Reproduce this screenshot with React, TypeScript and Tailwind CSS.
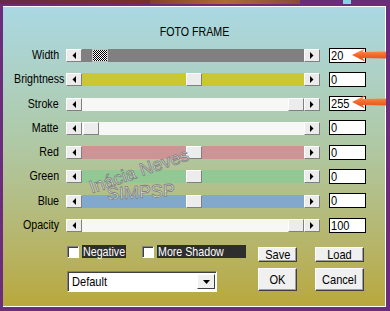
import React from "react";

type Row = { label: string; track: string; thumb: string; value: string; focus?: boolean };

const rows: Row[] = [
  { label: "Width", track: "bg-[#808080]", thumb: "ml-[10px]", value: "20", focus: true },
  { label: "Brightness", track: "bg-[#c8c833]", thumb: "ml-[104px]", value: "0" },
  { label: "Stroke", track: "bg-[#f7f7f5]", thumb: "ml-[206px]", value: "255" },
  { label: "Matte", track: "bg-[#f7f7f5]", thumb: "ml-[1px]", value: "0" },
  { label: "Red", track: "bg-[#cc9494]", thumb: "ml-[104px]", value: "0" },
  { label: "Green", track: "bg-[#92c894]", thumb: "ml-[104px]", value: "0" },
  { label: "Blue", track: "bg-[#82a8cc]", thumb: "ml-[104px]", value: "0" },
  { label: "Opacity", track: "bg-[#f7f7f5]", thumb: "ml-[206px]", value: "100" },
];

function ArrowBtn({ dir }: { dir: "left" | "right" }) {
  return (
    <div className="w-[16px] h-[13px] bg-[#ececec] border-t border-l border-white border-r border-b border-r-[#808080] border-b-[#808080] flex items-center justify-center shrink-0">
      <svg width="4" height="7" viewBox="0 0 4 7">
        {dir === "left" ? <polygon points="4,0 4,7 0.5,3.5" fill="#000" /> : <polygon points="0,0 0,7 3.5,3.5" fill="#000" />}
      </svg>
    </div>
  );
}

function OrangeArrow() {
  return (
    <svg width="34" height="14" viewBox="0 0 34 14">
      <defs>
        <linearGradient id="og" x1="0" y1="0" x2="0" y2="1">
          <stop offset="0" stopColor="#ffa060" />
          <stop offset="0.5" stopColor="#f4682a" />
          <stop offset="1" stopColor="#d84e1a" />
        </linearGradient>
      </defs>
      <polygon points="0,7 13,0.5 10.5,4 34,3.5 34,10.5 10.5,10 13,13.5" fill="url(#og)" />
    </svg>
  );
}

function Button({ label, className }: { label: string; className: string }) {
  return (
    <div className={`bg-[#f0f0f0] border border-t-white border-l-white border-r-[#404040] border-b-[#404040] shadow-[inset_-1px_-1px_0_#a0a0a0] flex items-center justify-center text-black text-[13px] leading-none ${className}`}>
      <span className="inline-block scale-x-[0.85] whitespace-nowrap">{label}</span>
    </div>
  );
}

function Check({ label, w }: { label: string; w: string }) {
  return (
    <div className="flex items-center">
      <div className="w-[12px] h-[12px] bg-white border border-t-[#808080] border-l-[#808080] border-r-white border-b-white shadow-[inset_1px_1px_0_#404040] shrink-0" />
      <div className={`ml-[3px] h-[13px] bg-[#2e2e2e] text-white text-[13px] leading-[13px] pl-[1px] whitespace-nowrap ${w}`}>
        <span className="inline-block scale-x-[0.82] origin-left">{label}</span>
      </div>
    </div>
  );
}

export default function App() {
  return (
    <div className="w-[390px] h-[311px] bg-[#6b2c7b] flex flex-col overflow-hidden [font-family:'Liberation_Sans',sans-serif]">
      <div className="h-[4px] flex shrink-0">
        <div className="w-[150px] bg-linear-to-r from-[#6a2848] to-[#7c2e2a]" />
        <div className="w-[150px] bg-linear-to-r from-[#8a3c28] via-[#b06a30] to-[#8a4a3a]" />
        <div className="w-[43px] bg-[#6b2c7b]" />
        <div className="w-[8px] bg-[#8fd0e0]" />
        <div className="flex-1 bg-[#6b2c7b]" />
      </div>
      <div className="flex-1 pt-[2px] pl-[3px] pr-[4px] pb-[4px] flex">
        <div className="relative flex-1 border-t border-r border-b border-white bg-linear-to-b from-[#aad8e3] via-[#afc9a6] via-45% to-[#b9a83a] flex flex-col text-black">
          <div className="pt-[17px] h-[32px] text-center text-[13px] leading-[15px]">
            <span className="inline-block scale-x-[0.82] whitespace-nowrap">FOTO FRAME</span>
          </div>
          <div className="mt-[9px] flex flex-col gap-[10.3px]">
            {rows.map((r) => (
              <div key={r.label} className="flex items-center h-[14px]">
                <div className="w-[56px] text-right text-[13px] leading-[14px] whitespace-nowrap">
                  <span className="inline-block scale-x-[0.82] origin-right">{r.label}</span>
                </div>
                <div className="ml-[7px] w-[254px] h-[13px] flex mt-[1px]">
                  <ArrowBtn dir="left" />
                  <div className={`flex-1 flex ${r.track}`}>
                    {r.focus ? (
                      <div className={`${r.thumb} w-[16px] h-[13px] border border-[#c0c0c0] bg-[repeating-conic-gradient(#000_0_25%,#fff_0_50%)] bg-[length:2px_2px]`} />
                    ) : (
                      <div className={`${r.thumb} w-[16px] h-[13px] bg-[#ececec] border-t border-l border-white border-r border-b border-r-[#808080] border-b-[#808080]`} />
                    )}
                  </div>
                  <ArrowBtn dir="right" />
                </div>
                <div className="ml-[9px] w-[37px] h-[15px] bg-white border border-black text-[13px] leading-[13px] pl-[1px] whitespace-nowrap">
                  <span className="inline-block scale-x-[0.85] origin-left">{r.value}</span>
                </div>
              </div>
            ))}
          </div>
          <div className="mt-[13px] flex">
            <div className="ml-[64px] w-[179px] flex flex-col shrink-0">
              <div className="flex items-center gap-[16px]">
                <Check label="Negative" w="w-[44px]" />
                <Check label="More Shadow" w="w-[89px]" />
              </div>
              <div className="mt-[13px] w-[150px] h-[21px] bg-white border border-t-[#808080] border-l-[#808080] border-r-white border-b-white shadow-[inset_1px_1px_0_#404040] flex items-center">
                <div className="flex-1 pl-[4px] text-[13px] leading-none whitespace-nowrap">
                  <span className="inline-block scale-x-[0.85] origin-left">Default</span>
                </div>
                <div className="w-[18px] h-[15px] mr-[1px] bg-[#f0f0f0] border border-t-white border-l-white border-r-[#404040] border-b-[#404040] flex items-center justify-center">
                  <svg width="7" height="4" viewBox="0 0 7 4"><polygon points="0,0 7,0 3.5,4" fill="#000" /></svg>
                </div>
              </div>
            </div>
            <div className="ml-[12px] pt-[2px] flex flex-col">
              <div className="flex gap-[18px]">
                <Button label="Save" className="w-[39px] h-[15px]" />
                <Button label="Load" className="w-[49px] h-[15px]" />
              </div>
              <div className="mt-[6px] flex gap-[18px]">
                <Button label="OK" className="w-[39px] h-[23px]" />
                <Button label="Cancel" className="w-[49px] h-[23px]" />
              </div>
            </div>
          </div>

          <div className="absolute left-[84px] top-[155px] -rotate-[19deg] text-[18px] leading-none text-[#eeeeeee6] [-webkit-text-stroke:0.8px_#808080] whitespace-nowrap">Inácia Neves</div>
          <div className="absolute left-[104px] top-[176px] -rotate-[3deg] text-[18px] leading-none text-[#eeeeeee6] [-webkit-text-stroke:0.8px_#808080] whitespace-nowrap">SIMPSP</div>

          <div className="absolute left-[349px] top-[41px]"><OrangeArrow /></div>
          <div className="absolute left-[349px] top-[88px]"><OrangeArrow /></div>
        </div>
      </div>
    </div>
  );
}
